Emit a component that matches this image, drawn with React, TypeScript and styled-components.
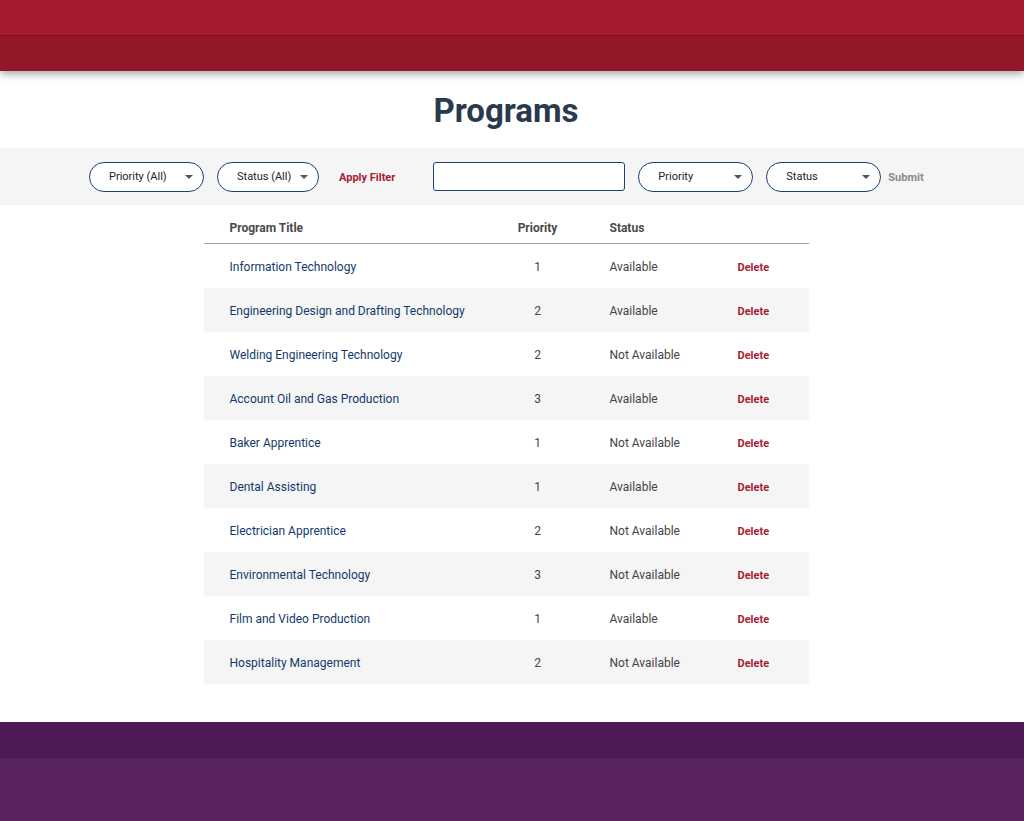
import React from "react";
import styled, { createGlobalStyle } from "styled-components";

const GlobalStyle = createGlobalStyle`
  html, body { margin: 0; padding: 0; background: #fff; }
  body { font-family: Roboto, "Liberation Sans", sans-serif; }
  * { box-sizing: border-box; }
`;

const Page = styled.div`
  display: flex;
  flex-direction: column;
  min-height: 821px;
`;

const Header = styled.header`
  display: flex;
  flex-direction: column;
  box-shadow: 0 3px 8px rgba(0, 0, 0, 0.35);
  position: relative;
  z-index: 1;
`;

const TopBar = styled.div`
  height: 36px;
  background: #a51b30;
  border-bottom: 1px solid #7e1222;
`;

const NavBar = styled.div`
  height: 35px;
  background: #921829;
`;

const Title = styled.h1`
  margin: 0 12px 0 0;
  padding: 20px 0 17px;
  text-align: center;
  font-size: 33px;
  line-height: 40px;
  font-weight: 700;
  color: #2a3a4d;
`;

const FilterBar = styled.div`
  height: 57px;
  background: #f5f5f5;
  display: flex;
  align-items: center;
  padding-left: 89px;
`;

const Select = styled.div<{ $w: number; $ml?: number }>`
  width: ${(p) => p.$w}px;
  margin-left: ${(p) => p.$ml ?? 0}px;
  height: 30px;
  border: 1px solid #1d4170;
  border-radius: 15px;
  background: #fff;
  display: flex;
  align-items: center;
  justify-content: space-between;
  padding: 0 10px 0 19px;
  font-size: 11px;
  color: #222;
`;

const Caret = styled.span`
  width: 0;
  height: 0;
  border-left: 4px solid transparent;
  border-right: 4px solid transparent;
  border-top: 4px solid #555;
`;

const TextLink = styled.span<{ $ml: number; $color: string }>`
  margin-left: ${(p) => p.$ml}px;
  padding-top: 2px;
  font-size: 11px;
  font-weight: 700;
  color: ${(p) => p.$color};
`;

const Input = styled.div`
  margin-left: 38px;
  width: 192px;
  height: 29px;
  border: 1px solid #1d4170;
  border-radius: 3px;
  background: #fff;
`;

const TableWrap = styled.div`
  display: flex;
  justify-content: center;
  padding: 7px 12px 38px 0;
`;

const Table = styled.div`
  width: 605px;
  display: flex;
  flex-direction: column;
`;

const Row = styled.div<{ $alt?: boolean; $head?: boolean }>`
  display: grid;
  grid-template-columns: 26px 250px 116px 142px 1fr;
  align-items: center;
  height: ${(p) => (p.$head ? "32px" : "44px")};
  background: ${(p) => (p.$alt ? "#f5f5f5" : "transparent")};
  border-bottom: ${(p) => (p.$head ? "1px solid #9aa2ad" : "none")};
  font-size: 12px;
`;

const HeadCell = styled.div<{ $center?: boolean; $pad?: boolean }>`
  font-weight: 700;
  color: #4a4a4a;
  text-align: ${(p) => (p.$center ? "center" : "left")};
  padding-left: ${(p) => (p.$pad ? "14px" : "0")};
`;

const TitleCell = styled.div`
  color: #113a6b;
  padding-top: 2px;
`;

const PriorityCell = styled.div`
  color: #444;
  text-align: center;
  padding-top: 2px;
`;

const StatusCell = styled.div`
  color: #444;
  padding-left: 14px;
  padding-top: 2px;
`;

const DeleteCell = styled.div`
  color: #a51b30;
  font-weight: 700;
  font-size: 11px;
  padding-top: 3px;
`;

const Footer = styled.footer`
  margin-top: auto;
  display: flex;
  flex-direction: column;
`;

const FooterTop = styled.div`
  height: 36px;
  background: #4e1957;
`;

const FooterBottom = styled.div`
  height: 63px;
  background: #5b2262;
`;

const programs = [
  ["Information Technology", 1, "Available"],
  ["Engineering Design and Drafting Technology", 2, "Available"],
  ["Welding Engineering Technology", 2, "Not Available"],
  ["Account Oil and Gas Production", 3, "Available"],
  ["Baker Apprentice", 1, "Not Available"],
  ["Dental Assisting", 1, "Available"],
  ["Electrician Apprentice", 2, "Not Available"],
  ["Environmental Technology", 3, "Not Available"],
  ["Film and Video Production", 1, "Available"],
  ["Hospitality Management", 2, "Not Available"],
] as const;

export default function App() {
  return (
    <Page>
      <GlobalStyle />
      <Header>
        <TopBar />
        <NavBar />
      </Header>
      <Title>Programs</Title>
      <FilterBar>
        <Select $w={115}>
          <span>Priority (All)</span>
          <Caret />
        </Select>
        <Select $w={102} $ml={13}>
          <span>Status (All)</span>
          <Caret />
        </Select>
        <TextLink $ml={20} $color="#a51b30">Apply Filter</TextLink>
        <Input />
        <Select $w={115} $ml={13}>
          <span>Priority</span>
          <Caret />
        </Select>
        <Select $w={115} $ml={13}>
          <span>Status</span>
          <Caret />
        </Select>
        <TextLink $ml={7} $color="#8a8a8a">Submit</TextLink>
      </FilterBar>
      <TableWrap>
        <Table>
          <Row $head>
            <span />
            <HeadCell>Program Title</HeadCell>
            <HeadCell $center>Priority</HeadCell>
            <HeadCell $pad>Status</HeadCell>
            <span />
          </Row>
          {programs.map(([title, pr, st], i) => (
            <Row key={title} $alt={i % 2 === 1}>
              <span />
              <TitleCell>{title}</TitleCell>
              <PriorityCell>{pr}</PriorityCell>
              <StatusCell>{st}</StatusCell>
              <DeleteCell>Delete</DeleteCell>
            </Row>
          ))}
        </Table>
      </TableWrap>
      <Footer>
        <FooterTop />
        <FooterBottom />
      </Footer>
    </Page>
  );
}
